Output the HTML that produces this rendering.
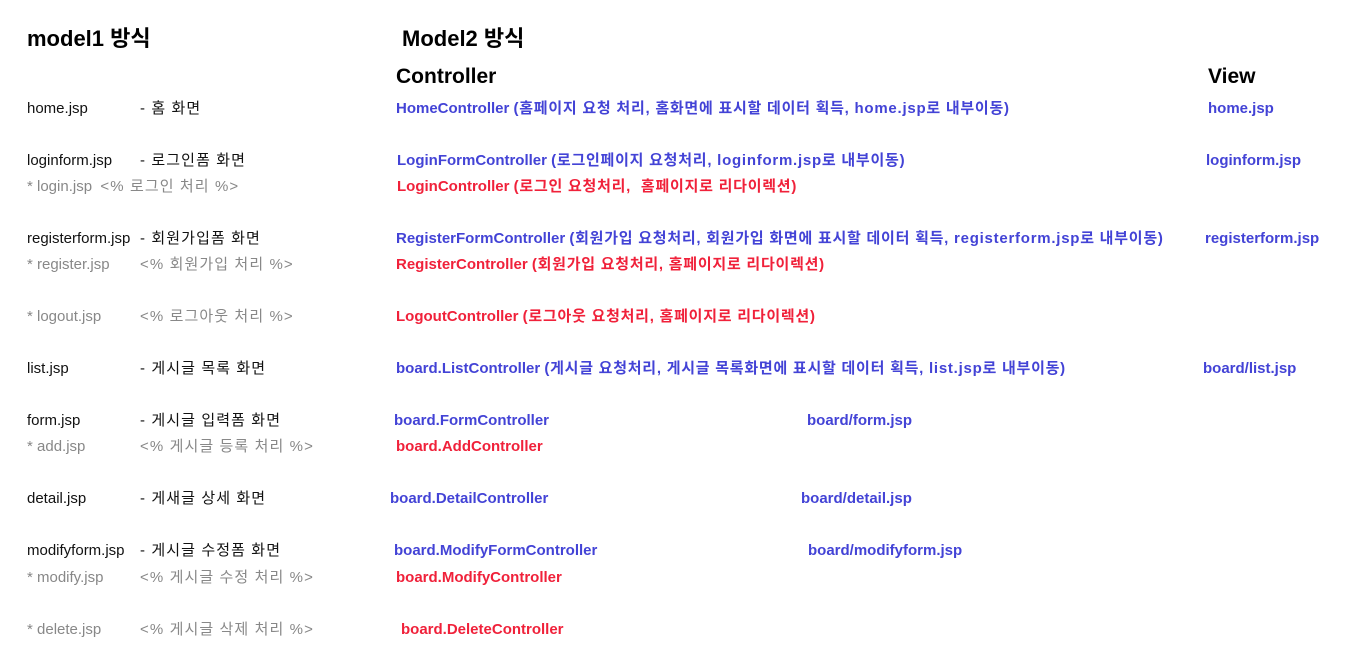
<!DOCTYPE html>
<html><head><meta charset="utf-8"><style>
body{margin:0;width:1346px;height:659px;background:#fff;position:relative;overflow:hidden;font-family:"Liberation Sans","Noto Sans CJK KR",sans-serif;}
div{position:absolute;white-space:pre;line-height:20px;font-size:15px;margin-top:2px;}
.h{font-weight:bold;font-size:22px;color:#000;line-height:26px;margin-top:0}
.k{color:#111}
.g{color:#888}
.b{color:#4343d6;font-weight:bold}
.r{color:#f0213a;font-weight:bold}
.c{letter-spacing:1.1px}
.b .c,.r .c{letter-spacing:0.75px}
</style></head><body>
<div class="h" style="left:27px;top:26px">model1 방식</div>
<div class="h" style="left:402px;top:26px">Model2 방식</div>
<div class="h" style="left:396px;top:64px;font-size:21px">Controller</div>
<div class="h" style="left:1208px;top:64px;font-size:21px">View</div>

<div class="k" style="left:27px;top:97px">home.jsp</div><div class="k c" style="left:140px;top:97px">- 홈 화면</div>
<div class="b" style="left:396px;top:97px">HomeController <span class="c">(홈페이지 요청 처리, 홈화면에 표시할 데이터 획득, home.jsp로 내부이동)</span></div>
<div class="b" style="left:1208px;top:97px">home.jsp</div>

<div class="k" style="left:27px;top:149px">loginform.jsp</div><div class="k c" style="left:140px;top:149px">- 로그인폼 화면</div>
<div class="b" style="left:397px;top:149px">LoginFormController <span class="c">(로그인페이지 요청처리, loginform.jsp로 내부이동)</span></div>
<div class="b" style="left:1206px;top:149px">loginform.jsp</div>
<div class="g" style="left:27px;top:175px">* login.jsp  <span class="c">&lt;% 로그인 처리 %&gt;</span></div>
<div class="r" style="left:397px;top:175px">LoginController <span class="c">(로그인 요청처리,  홈페이지로 리다이렉션)</span></div>

<div class="k" style="left:27px;top:227px">registerform.jsp</div><div class="k c" style="left:140px;top:227px">- 회원가입폼 화면</div>
<div class="b" style="left:396px;top:227px">RegisterFormController <span class="c">(회원가입 요청처리, 회원가입 화면에 표시할 데이터 획득, registerform.jsp로 내부이동)</span></div>
<div class="b" style="left:1205px;top:227px">registerform.jsp</div>
<div class="g" style="left:27px;top:253px">* register.jsp</div><div class="g c" style="left:140px;top:253px">&lt;% 회원가입 처리 %&gt;</div>
<div class="r" style="left:396px;top:253px">RegisterController <span class="c">(회원가입 요청처리, 홈페이지로 리다이렉션)</span></div>

<div class="g" style="left:27px;top:305px">* logout.jsp</div><div class="g c" style="left:140px;top:305px">&lt;% 로그아웃 처리 %&gt;</div>
<div class="r" style="left:396px;top:305px">LogoutController <span class="c">(로그아웃 요청처리, 홈페이지로 리다이렉션)</span></div>

<div class="k" style="left:27px;top:357px">list.jsp</div><div class="k c" style="left:140px;top:357px">- 게시글 목록 화면</div>
<div class="b" style="left:396px;top:357px">board.ListController <span class="c">(게시글 요청처리, 게시글 목록화면에 표시할 데이터 획득, list.jsp로 내부이동)</span></div>
<div class="b" style="left:1203px;top:357px">board/list.jsp</div>

<div class="k" style="left:27px;top:409px">form.jsp</div><div class="k c" style="left:140px;top:409px">- 게시글 입력폼 화면</div>
<div class="b" style="left:394px;top:409px">board.FormController</div>
<div class="b" style="left:807px;top:409px">board/form.jsp</div>
<div class="g" style="left:27px;top:435px">* add.jsp</div><div class="g c" style="left:140px;top:435px">&lt;% 게시글 등록 처리 %&gt;</div>
<div class="r" style="left:396px;top:435px">board.AddController</div>

<div class="k" style="left:27px;top:487px">detail.jsp</div><div class="k c" style="left:140px;top:487px">- 게새글 상세 화면</div>
<div class="b" style="left:390px;top:487px">board.DetailController</div>
<div class="b" style="left:801px;top:487px">board/detail.jsp</div>

<div class="k" style="left:27px;top:539px">modifyform.jsp</div><div class="k c" style="left:140px;top:539px">- 게시글 수정폼 화면</div>
<div class="b" style="left:394px;top:539px">board.ModifyFormController</div>
<div class="b" style="left:808px;top:539px">board/modifyform.jsp</div>
<div class="g" style="left:27px;top:566px">* modify.jsp</div><div class="g c" style="left:140px;top:566px">&lt;% 게시글 수정 처리 %&gt;</div>
<div class="r" style="left:396px;top:566px">board.ModifyController</div>

<div class="g" style="left:27px;top:618px">* delete.jsp</div><div class="g c" style="left:140px;top:618px">&lt;% 게시글 삭제 처리 %&gt;</div>
<div class="r" style="left:401px;top:618px">board.DeleteController</div>
</body></html>
